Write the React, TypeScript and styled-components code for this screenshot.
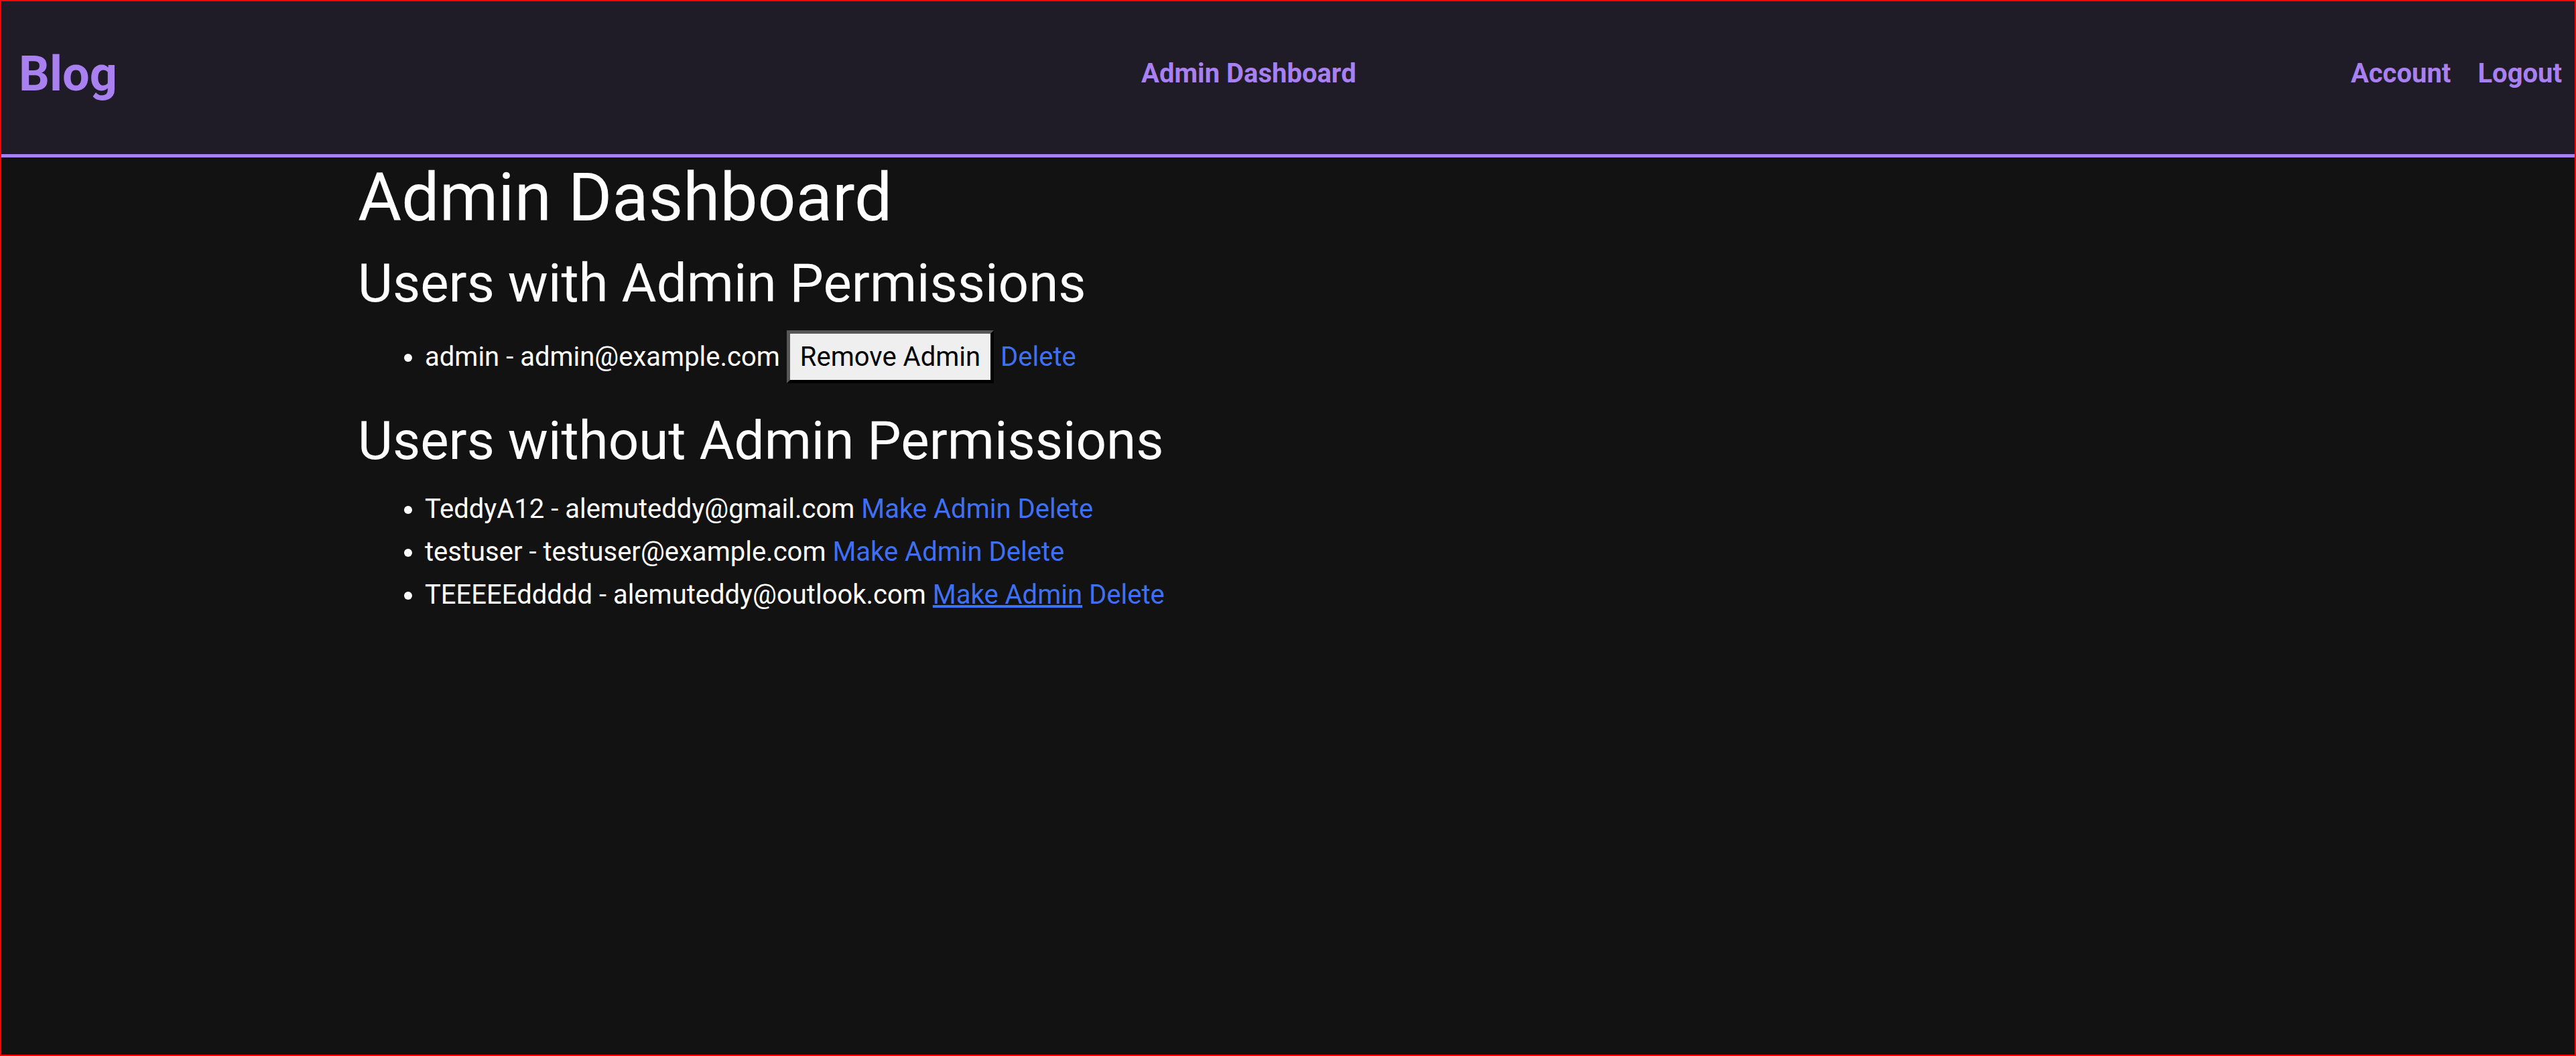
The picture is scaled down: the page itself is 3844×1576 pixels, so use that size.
import styled, { createGlobalStyle } from "styled-components";

type User = {
  id: string;
  username: string;
  email: string;
  isAdmin: boolean;
};

const users: User[] = [
  { id: "1", username: "admin", email: "admin@example.com", isAdmin: true },
  { id: "2", username: "TeddyA12", email: "alemuteddy@gmail.com", isAdmin: false },
  { id: "3", username: "testuser", email: "testuser@example.com", isAdmin: false },
  { id: "4", username: "TEEEEEddddd", email: "alemuteddy@outlook.com", isAdmin: false },
];

// last row's "Make Admin" is shown hovered in the screenshot
const hoveredId = "4";

const GlobalStyle = createGlobalStyle`
  * {
    box-sizing: border-box;
  }

  html,
  body {
    margin: 0;
    padding: 0;
    background: #121212;
  }

  body {
    font-family: Roboto, "Liberation Sans", Arial, sans-serif;
    font-size: 40px;
    line-height: 64px;
    color: #ffffff;
  }
`;

const Page = styled.div`
  min-height: 100vh;
  border: 2px solid #ff0000;
  background: #121212;
`;

const Header = styled.header`
  height: 233px;
  display: flex;
  align-items: center;
  justify-content: space-between;
  padding: 0 19px 12px 26px;
  background: #1f1c27;
  border-bottom: 5px solid #a880f0;
`;

const Logo = styled.a`
  margin-right: 44px;
  font-size: 72px;
  line-height: 115px;
  font-weight: 700;
  color: #a880f0;
  text-decoration: none;
`;

const NavLink = styled.a`
  font-size: 40px;
  line-height: 64px;
  font-weight: 700;
  color: #a880f0;
  text-decoration: none;
`;

const NavGroup = styled.nav`
  display: flex;
  align-items: center;
  gap: 40px;
`;

const Main = styled.main`
  width: 2776px;
  margin: 0 auto;
`;

const Title = styled.h1`
  margin: 0 0 20px;
  font-size: 100px;
  line-height: 120px;
  font-weight: 400;
`;

const SectionTitle = styled.h2`
  margin: 0 0 20px;
  font-size: 80px;
  line-height: 96px;
  font-weight: 400;
`;

const UserList = styled.ul`
  margin: 0 0 38px;
  padding: 2px 0 0 100px;
`;

const UserItem = styled.li`
  line-height: 64px;
`;

const RemoveButton = styled.button`
  font-family: inherit;
  font-size: 40px;
  line-height: 64px;
  color: #000000;
  background: #efefef;
  padding: 2.5px 15px;
  border-width: 5px;
  border-style: solid;
  border-color: #575757 #000000 #000000 #575757;
  cursor: pointer;
`;

const ActionLink = styled.a<{ $hovered?: boolean }>`
  color: #4070f2;
  text-decoration: ${(p) => (p.$hovered ? "underline" : "none")};
  cursor: pointer;

  &:hover {
    text-decoration: underline;
  }
`;

const App = () => {
  const admins = users.filter((u) => u.isAdmin);
  const others = users.filter((u) => !u.isAdmin);

  return (
    <>
      <GlobalStyle />
      <Page>
        <Header>
          <Logo href="#">Blog</Logo>
          <NavLink href="#">Admin Dashboard</NavLink>
          <NavGroup>
            <NavLink href="#">Account</NavLink>
            <NavLink href="#">Logout</NavLink>
          </NavGroup>
        </Header>
        <Main>
          <Title>Admin Dashboard</Title>
          <SectionTitle>Users with Admin Permissions</SectionTitle>
          <UserList>
            {admins.map((user) => (
              <UserItem key={user.id}>
                {user.username} - {user.email}{" "}
                <RemoveButton>Remove Admin</RemoveButton>{" "}
                <ActionLink>Delete</ActionLink>
              </UserItem>
            ))}
          </UserList>
          <SectionTitle>Users without Admin Permissions</SectionTitle>
          <UserList>
            {others.map((user) => (
              <UserItem key={user.id}>
                {user.username} - {user.email}{" "}
                <ActionLink $hovered={user.id === hoveredId}>Make Admin</ActionLink>{" "}
                <ActionLink>Delete</ActionLink>
              </UserItem>
            ))}
          </UserList>
        </Main>
      </Page>
    </>
  );
};

export default App;
